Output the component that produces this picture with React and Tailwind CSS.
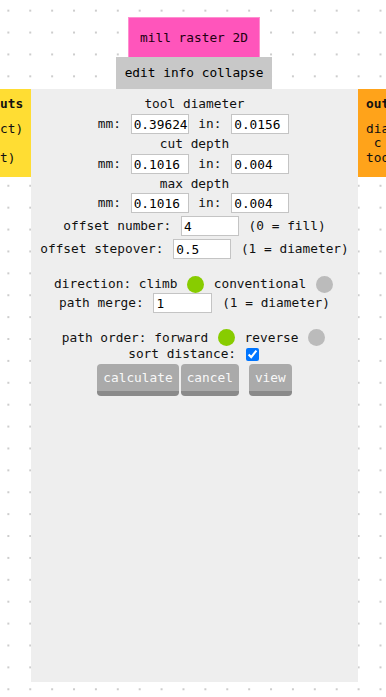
import React from 'react';

const mono = "font-['DejaVu_Sans_Mono','Liberation_Mono',monospace]";

const Field = ({ value, w = 'w-[58px]' }) => (
    <input
        readOnly
        value={value}
        className={`${w} h-[20px] mx-[2px] pl-[2px] pr-0 bg-white border border-[#c4c4c4] text-[12.8px] text-black outline-none ${mono}`}
    />
);

const Dot = ({ on }) => (
    <span className={`inline-block w-[17px] h-[17px] mx-[2px] rounded-full ${on ? 'bg-[#88cc00]' : 'bg-[#bbbbbb]'}`} />
);

const Row = ({ className = 'h-[20px]', children }) => (
    <div className={`flex items-center justify-center whitespace-pre ${className}`}>{children}</div>
);

const Btn = ({ children, className = '' }) => (
    <button className={`h-[32px] px-[6px] rounded-[4px] bg-[#aaaaaa] border-b-[5px] border-[#8a8a8a] text-[#f8f8f8] leading-[27px] ${className}`}>
        {children}
    </button>
);

const App = () => {
    return (
        <div className={`relative w-[386px] h-[697px] overflow-hidden bg-white text-[12.8px] text-[#111] ${mono} bg-[radial-gradient(circle,#cdcdcd_0.9px,transparent_1.3px)] bg-[size:21.9px_21.9px] bg-[position:-2.6px_-0.3px]`}>
            {/* title */}
            <div className="absolute left-[128px] top-[17px] w-[132px] h-[40px] bg-[#ff55bb] border-t border-x border-[#ff8fd0] flex items-center justify-center text-[#220011]">
                mill raster 2D
            </div>
            <div className="absolute left-[116px] top-[57px] w-[156px] h-[32px] bg-[#c8c8c8] flex items-center justify-center text-black">
                edit info collapse
            </div>

            {/* neighbour nodes */}
            <div className="absolute left-0 top-[89px] w-[31px] h-[88px] bg-[#ffdd33] overflow-hidden text-right leading-[14.5px]">
                <div className="pr-[9px] pt-[8px] font-bold">uts</div>
                <div className="pr-[9px] mt-[10px]">ct)</div>
                <div className="h-[14.5px]"></div>
                <div className="pr-[17px]">t)</div>
            </div>
            <div className="absolute left-[358px] top-[89px] w-[28px] h-[88px] bg-[#ffa31a] overflow-hidden whitespace-pre leading-[14.5px] pl-[8px]">
                <div className="pt-[8px] font-bold">out</div>
                <div className="mt-[10px]">dia</div>
                <div> c</div>
                <div>too</div>
            </div>

            {/* panel */}
            <div className="absolute left-[31px] top-[89px] w-[327px] h-[593px] bg-[#eeeeee] pt-[5px]">
                <Row>tool diameter</Row>
                <Row>mm: <Field value="0.39624" /> in: <Field value="0.0156" /></Row>
                <Row>cut depth</Row>
                <Row>mm: <Field value="0.1016" /> in: <Field value="0.004" /></Row>
                <Row className="h-[19px]">max depth</Row>
                <Row>mm: <Field value="0.1016" /> in: <Field value="0.004" /></Row>
                <Row className="h-[20px] mt-[3px]">offset number: <Field value="4" /> (0 = fill)</Row>
                <Row className="h-[20px] mt-[3px]">offset stepover: <Field value="0.5" /> (1 = diameter)</Row>

                <Row className="h-[18px] mt-[16px]">direction: climb <Dot on /> conventional <Dot /></Row>
                <Row className="h-[20px]">path merge: <Field value="1" w="w-[59px]" /> (1 = diameter)</Row>

                <Row className="h-[17px] mt-[16px]">path order: forward <Dot on /> reverse <Dot /></Row>
                <Row className="h-[16px]">
                    sort distance: <input type="checkbox" readOnly checked className="w-[13px] h-[13px] mx-[2px] accent-[#0075ff]" />
                </Row>
                <div className="flex justify-center mt-[2px]">
                    <Btn>calculate</Btn>
                    <Btn className="ml-[2px]">cancel</Btn>
                    <Btn className="ml-[10px]">view</Btn>
                </div>
            </div>
        </div>
    );
};

export default App;
